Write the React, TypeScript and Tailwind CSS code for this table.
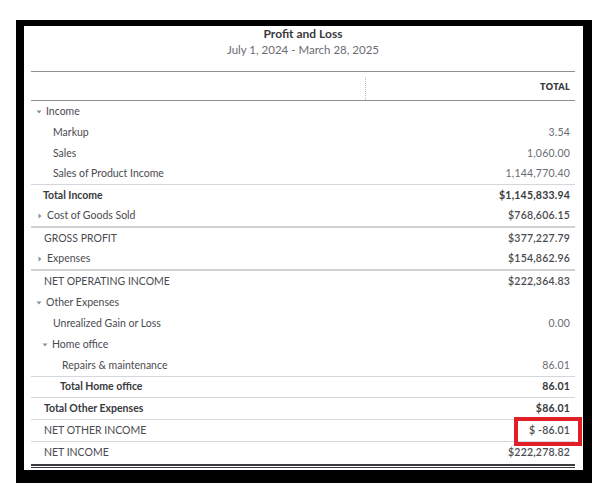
import type { ReactNode } from 'react'

type TRow = {
  label: string
  value: string
  pl: string
  caret?: 'down' | 'right'
  caretPl?: string
  strong?: boolean
  muted?: boolean
  line?: 'thin' | 'thick'
  h?: string
  flag?: boolean
}

const rows: TRow[] = [
  { label: 'Income', value: '', pl: 'pl-[16px]', caret: 'down', caretPl: 'pl-[5px]' },
  { label: 'Markup', value: '3.54', pl: 'pl-[22px]', muted: true },
  { label: 'Sales', value: '1,060.00', pl: 'pl-[22px]', muted: true },
  { label: 'Sales of Product Income', value: '1,144,770.40', pl: 'pl-[22px]', muted: true, line: 'thin' },
  { label: 'Total Income', value: '$1,145,833.94', pl: 'pl-[12px]', strong: true },
  { label: 'Cost of Goods Sold', value: '$768,606.15', pl: 'pl-[13px]', caret: 'right', caretPl: 'pl-[6px]', line: 'thick' },
  { label: 'GROSS PROFIT', value: '$377,227.79', pl: 'pl-[13px]' },
  { label: 'Expenses', value: '$154,862.96', pl: 'pl-[14px]', caret: 'right', caretPl: 'pl-[6px]', line: 'thick' },
  { label: 'NET OPERATING INCOME', value: '$222,364.83', pl: 'pl-[13px]' },
  { label: 'Other Expenses', value: '', pl: 'pl-[16px]', caret: 'down', caretPl: 'pl-[5px]' },
  { label: 'Unrealized Gain or Loss', value: '0.00', pl: 'pl-[22px]', muted: true },
  { label: 'Home office', value: '', pl: 'pl-[22px]', caret: 'down', caretPl: 'pl-[11px]' },
  { label: 'Repairs & maintenance', value: '86.01', pl: 'pl-[31px]', muted: true, line: 'thin', h: 'h-[22px]' },
  { label: 'Total Home office', value: '86.01', pl: 'pl-[29px]', strong: true, line: 'thin' },
  { label: 'Total Other Expenses', value: '$86.01', pl: 'pl-[13px]', strong: true, line: 'thin', h: 'h-[22px]' },
  { label: 'NET OTHER INCOME', value: '$ -86.01', pl: 'pl-[13px]', line: 'thin', h: 'h-[22px]', flag: true },
  { label: 'NET INCOME', value: '$222,278.82', pl: 'pl-[13px]' },
]

function Caret({ dir }: { dir: 'down' | 'right' }) {
  return (
    <svg width="6" height="6" viewBox="0 0 6 6" className="shrink-0">
      {dir === 'down' ? (
        <path d="M0.5 1.5 L5.5 1.5 L3 4.5 Z" fill="#8d9096" />
      ) : (
        <path d="M1.5 0.5 L4.5 3 L1.5 5.5 Z" fill="#8d9096" />
      )}
    </svg>
  )
}

function ReportRow({ row }: { row: TRow }) {
  const border =
    row.line === 'thin'
      ? 'border-b border-[#d4d7dc]'
      : row.line === 'thick'
        ? 'border-b-2 border-[#cfd1d5]'
        : ''
  const height = row.h ?? (row.line === 'thick' ? 'h-[22px]' : 'h-[21px]')

  let label: ReactNode = row.label
  if (row.caret) {
    label = (
      <span className={`flex items-center ${row.caretPl}`}>
        <Caret dir={row.caret} />
        <span className="pl-[4px]">{row.label}</span>
      </span>
    )
  }

  return (
    <div className={`relative flex items-center justify-between ${height} ${border}`}>
      <div
        className={`${row.caret ? '' : row.pl} text-[10.5px] ${
          row.strong ? 'font-bold text-[#393a3d]' : 'text-[#4a4b4f]'
        }`}
      >
        {label}
      </div>
      <div
        className={`pr-[5px] text-[10.5px] tracking-[0.2px] ${
          row.strong ? 'font-bold text-[#393a3d]' : row.muted ? 'text-[#6b6c72]' : 'font-semibold text-[#4a4b4f]'
        }`}
      >
        {row.value}
      </div>
      {row.flag && (
        <div className="absolute right-[-7px] top-[-3px] h-[29px] w-[68px] border-[4px] border-[#e21f26]" />
      )}
    </div>
  )
}

export default function App() {
  return (
    <main className="h-[502px] w-[610px] bg-white pl-[16px] pt-[20px] font-['Lato','Noto_Sans',sans-serif]">
      <div className="h-[463px] w-[576px] border-b-[13px] border-l-[8px] border-r-[9px] border-t-[6px] border-black bg-white">
        <section className="px-[7px] pr-[8px]">
          {/* report heading */}
          <div className="text-center">
            <h1 className="text-[12px] font-bold leading-[16px] text-[#393a3d]">Profit and Loss</h1>
            <p className="text-[11.5px] leading-[16px] text-[#6b6c72]">July 1, 2024 - March 28, 2025</p>
          </div>

          <div className="mt-[13px] border-t border-[#8d9096]" />

          {/* column header */}
          <div className="relative flex h-[29px] items-end justify-end border-b border-[#8d9096] pb-[7px] pr-[5px]">
            <div className="absolute left-[334px] top-[5px] h-[23px] border-l border-dotted border-[#b8babd]" />
            <span className="text-[9px] font-extrabold tracking-[0.3px] text-[#393a3d]">TOTAL</span>
          </div>

          {rows.map((r) => (
            <ReportRow key={r.label} row={r} />
          ))}

          {/* double rule under net income */}
          <div className="mt-[1px] h-[2px] bg-[#393a3d]" />
          <div className="mt-[1px] h-[1px] bg-[#393a3d]" />
        </section>
      </div>
    </main>
  )
}
